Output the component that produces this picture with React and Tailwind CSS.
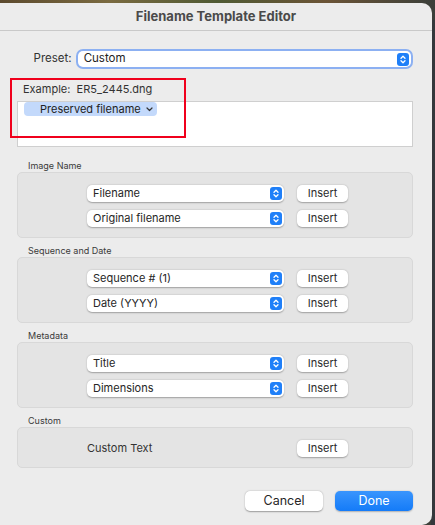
const FONT = { fontFamily: 'Inter, "Noto Sans", "Liberation Sans", sans-serif' }

function Stepper() {
  return (
    <span className="w-[12px] h-[13px] rounded-[3px] bg-[#1f7ff8] flex items-center justify-center flex-shrink-0">
      <svg width="6" height="9" viewBox="0 0 6 9" fill="none" stroke="white" strokeWidth="1.3" strokeLinecap="round" strokeLinejoin="round">
        <path d="M1 3.2 L3 1.2 L5 3.2" />
        <path d="M1 5.8 L3 7.8 L5 5.8" />
      </svg>
    </span>
  )
}

function Select({ label }) {
  return (
    <div className="w-[197px] h-[17px] bg-white rounded-[5px] flex items-center justify-between pl-[6px] pr-[2px] shadow-[0_0.5px_1.5px_rgba(0,0,0,0.3)]">
      <span className="text-[11px] text-[#262626] leading-none whitespace-nowrap">{label}</span>
      <Stepper />
    </div>
  )
}

function InsertBtn() {
  return (
    <button className="w-[51px] h-[17px] bg-white rounded-[5px] text-[11px] text-[#2a2a2a] leading-none flex items-center justify-center shadow-[0_0.5px_1.5px_rgba(0,0,0,0.3)]">
      Insert
    </button>
  )
}

function Group({ title, first, children }) {
  return (
    <div>
      <div className={`${first ? 'h-[25px]' : 'h-[19px]'} flex items-end pb-[2px] pl-[11px]`}>
        <span className="text-[9px] text-[#3a3a3a] leading-none">{title}</span>
      </div>
      <div className="bg-[#e4e4e4] border border-[#d8d8d8] rounded-[5px]">{children}</div>
    </div>
  )
}

function Rows({ items }) {
  return (
    <div className="pt-[12px] pb-[10px] pl-[69px] flex flex-col gap-[8px]">
      {items.map(it => (
        <div key={it} className="flex items-center gap-[13px] h-[17px]">
          <Select label={it} />
          <InsertBtn />
        </div>
      ))}
    </div>
  )
}

export default function App() {
  return (
    <div className="w-[435px] h-[525px] bg-[linear-gradient(90deg,#5c4a2e,#7a6a40,#4f5a34,#6b5436,#3b3f3a)] relative overflow-hidden" style={FONT}>
      <div className="absolute right-0 top-[20px] w-[4px] h-[505px] bg-[#34383c]" />
      <div className="relative mt-[3px] w-[432px] h-[522px] bg-[#ececec] rounded-tr-[10px] rounded-br-[10px]">
        {/* title bar */}
        <div className="h-[28px] border-b border-[#c9c9c9] flex items-center justify-center">
          <span className="text-[13px] font-bold text-[#4a4a4a]">Filename Template Editor</span>
        </div>

        <div className="pl-[17px] pr-[19px]">
          {/* preset */}
          <div className="mt-[18px] flex items-center h-[20px] -ml-[17px]">
            <span className="w-[72px] text-right text-[11.5px] text-[#333]">Preset:</span>
            <div className="ml-[4px] w-[339px] h-[20px] rounded-[7px] bg-[#8cb0f2] p-[2px]">
              <div className="w-full h-full bg-white rounded-[5px] flex items-center justify-between pl-[6px] pr-[2px]">
                <span className="text-[11.5px] text-[#222] leading-none">Custom</span>
                <Stepper />
              </div>
            </div>
          </div>

          {/* example */}
          <div className="mt-[13px] h-[15px] flex items-center pl-[6px]">
            <span className="text-[11px] text-[#333] leading-none whitespace-nowrap">Example:&nbsp; ER5_2445.dng</span>
          </div>

          {/* template field */}
          <div className="mt-[4px] h-[46px] bg-white border border-[#cfcfcf] pl-[6px] flex items-start">
            <span className="flex items-center h-[14px] rounded-[4px] bg-[#c3d9fb] pl-[16px] pr-[4px] gap-[5px] whitespace-nowrap">
              <span className="text-[11px] text-[#222] leading-none">Preserved filename</span>
              <svg width="7" height="5" viewBox="0 0 7 5" fill="none" stroke="#333" strokeWidth="1.2" strokeLinecap="round" strokeLinejoin="round">
                <path d="M1 1 L3.5 3.5 L6 1" />
              </svg>
            </span>
          </div>

          <Group title="Image Name" first>
            <Rows items={['Filename', 'Original filename']} />
          </Group>
          <Group title="Sequence and Date">
            <Rows items={['Sequence # (1)', 'Date (YYYY)']} />
          </Group>
          <Group title="Metadata">
            <Rows items={['Title', 'Dimensions']} />
          </Group>
          <Group title="Custom">
            <div className="h-[39px] flex items-center pl-[69px] pt-[1px]">
              <span className="w-[210px] text-[11px] text-[#333] leading-none">Custom Text</span>
              <InsertBtn />
            </div>
          </Group>

          {/* footer buttons */}
          <div className="mt-[23px] flex justify-end gap-[12px]">
            <button className="w-[78px] h-[20px] bg-white rounded-[5px] text-[12.5px] text-[#262626] leading-none shadow-[0_0.5px_1.5px_rgba(0,0,0,0.35)]">Cancel</button>
            <button className="w-[78px] h-[20px] rounded-[5px] text-[12.5px] text-white leading-none bg-[linear-gradient(180deg,#3a95fd,#147bf8)] shadow-[0_0.5px_1.5px_rgba(0,0,0,0.25)]">Done</button>
          </div>
        </div>

        {/* annotation */}
        <div className="absolute left-[10px] top-[75px] w-[176px] h-[60px] border-2 border-[#f0001c]" />
      </div>
    </div>
  )
}
